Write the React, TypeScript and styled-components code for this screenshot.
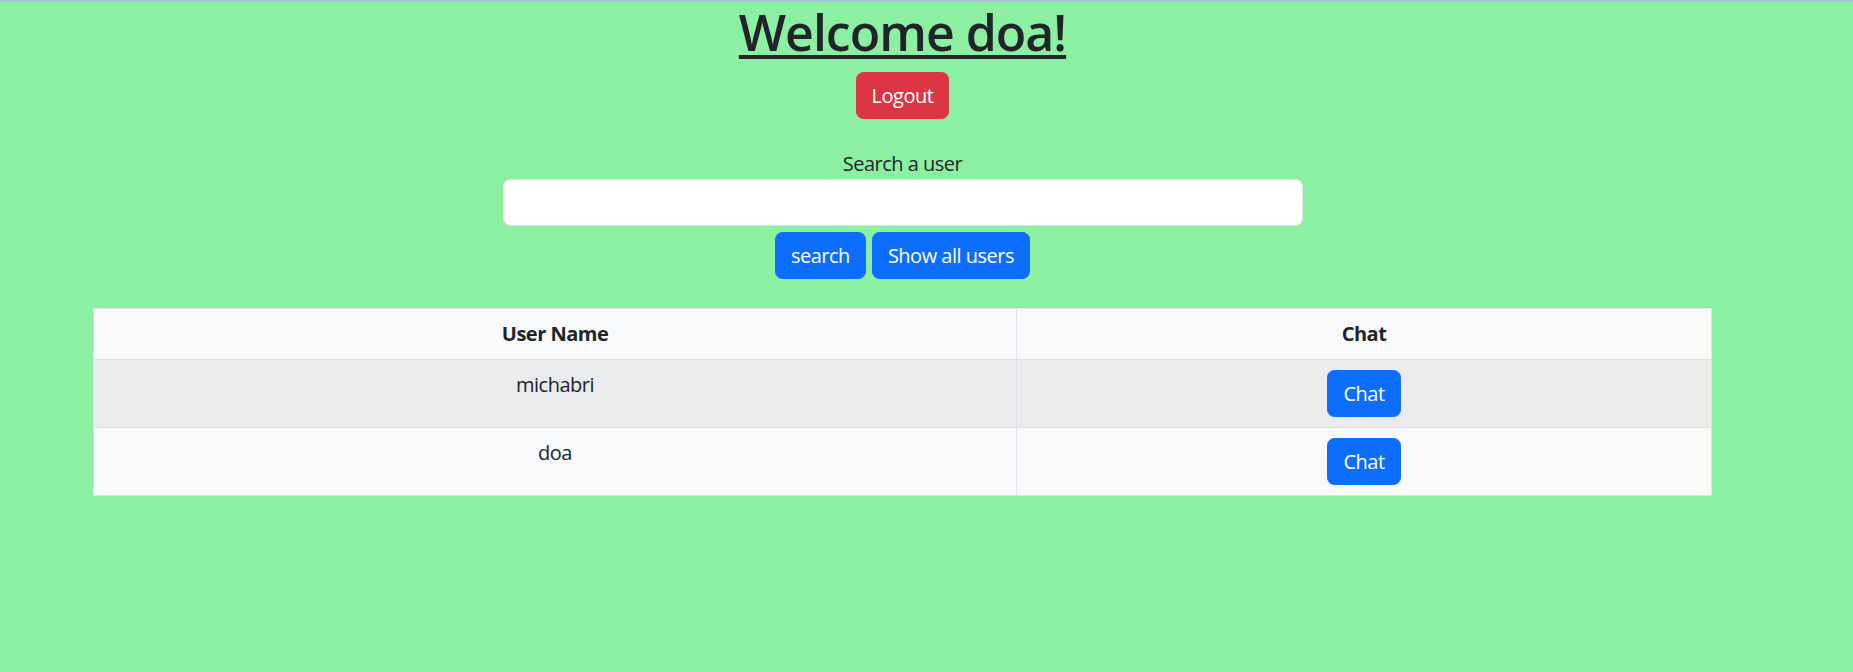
import React from 'react';
import styled, { createGlobalStyle } from 'styled-components';

const GlobalStyle = createGlobalStyle`
  html, body {
    margin: 0;
    padding: 0;
  }
  body {
    background: #8bf0a1;
    border-top: 2px solid #b1bbe3;
    font-family: 'Open Sans', 'Noto Sans', sans-serif;
    color: #212529;
    min-height: 670px;
  }
`;

const Page = styled.main`
  width: 1805px;
  text-align: center;
  letter-spacing: -0.5px;
`;

const Title = styled.h1`
  margin: 0 0 10px;
  font-size: 50px;
  font-weight: 600;
  line-height: 60px;
  letter-spacing: -1px;
  text-decoration: underline;
  text-decoration-thickness: 4px;
  text-underline-offset: 4px;
`;

const Button = styled.button<{ $variant?: 'primary' | 'danger' }>`
  display: inline-block;
  padding: 7.5px 15px;
  border: 1px solid ${(p) => (p.$variant === 'danger' ? '#dc3545' : '#0d6efd')};
  border-radius: 7.5px;
  background: ${(p) => (p.$variant === 'danger' ? '#dc3545' : '#0d6efd')};
  color: #fff;
  font-family: inherit;
  font-size: 20px;
  line-height: 30px;
  letter-spacing: -0.5px;
  cursor: pointer;
`;

const SearchForm = styled.form`
  margin-top: 30px;
`;

const Label = styled.label`
  display: block;
  font-size: 20px;
  line-height: 30px;
`;

const Input = styled.input`
  display: block;
  box-sizing: border-box;
  width: 800px;
  height: 47px;
  margin: 0 auto;
  padding: 7.5px 15px;
  border: 1px solid #dee2e6;
  border-radius: 7.5px;
  background: #fff;
  font-family: inherit;
  font-size: 20px;
  outline: none;
`;

const Actions = styled.div`
  display: flex;
  justify-content: center;
  gap: 6px;
  margin-top: 6px;
`;

const Table = styled.table`
  width: 1619px;
  margin: 29px auto 0;
  border-collapse: collapse;
  table-layout: fixed;
  font-size: 20px;
  line-height: 30px;
  vertical-align: top;
`;

const Row = styled.tr<{ $striped?: boolean }>`
  background: ${(p) => (p.$striped ? '#eaebec' : '#f8f9fa')};
`;

const HeadCell = styled.th`
  padding: 10px;
  border: 1px solid #dee2e6;
  font-weight: 700;
`;

const Cell = styled.td`
  padding: 10px;
  border: 1px solid #dee2e6;
  border-top-color: #d9dadb;
  vertical-align: top;
`;

const users = ['michabri', 'doa'];

export default function App() {
  return (
    <>
      <GlobalStyle />
      <Page>
        <Title>Welcome doa!</Title>
        <Button $variant="danger">Logout</Button>
        <SearchForm onSubmit={(e) => e.preventDefault()}>
          <Label htmlFor="search">Search a user</Label>
          <Input id="search" type="text" />
          <Actions>
            <Button type="submit">search</Button>
            <Button type="button">Show all users</Button>
          </Actions>
        </SearchForm>
        <Table>
          <colgroup>
            <col style={{ width: 923 }} />
            <col />
          </colgroup>
          <thead>
            <Row>
              <HeadCell>User Name</HeadCell>
              <HeadCell>Chat</HeadCell>
            </Row>
          </thead>
          <tbody>
            {users.map((name, i) => (
              <Row key={name} $striped={i % 2 === 0}>
                <Cell>{name}</Cell>
                <Cell>
                  <Button type="button">Chat</Button>
                </Cell>
              </Row>
            ))}
          </tbody>
        </Table>
      </Page>
    </>
  );
}
